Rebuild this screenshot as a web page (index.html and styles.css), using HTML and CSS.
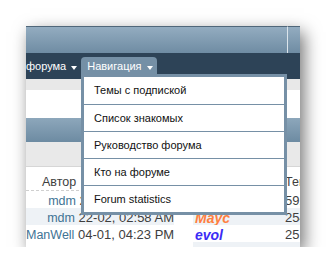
FILE: index.html
```html
<!DOCTYPE html>
<html lang="ru">
<head>
    <meta charset="UTF-8">
    <title>Навигация</title>
    <link rel="stylesheet" href="styles.css">
</head>
<body>
    <div class="window">
        <div class="topbar">
            <div class="topbar-main"></div>
            <div class="topbar-side"></div>
        </div>

        <div class="navbar">
            <span class="nav-item">форума <i class="caret"></i></span>
            <span class="nav-item nav-tab">Навигация <i class="caret"></i></span>
        </div>

        <div class="substrip"></div>
        <div class="blank"></div>
        <div class="blockhead"></div>
        <div class="blocksub"></div>

        <div class="threads">
            <div class="row head">
                <div class="cell author"><span class="sort">Автор</span></div>
                <div class="cell gap"></div>
                <div class="cell user"></div>
                <div class="cell num">Темы</div>
            </div>
            <div class="row">
                <div class="cell author"><a class="user-link">mdm</a> 23-02, 11:14 AM</div>
                <div class="cell gap"></div>
                <div class="cell user"></div>
                <div class="cell num">5921</div>
            </div>
            <div class="row alt">
                <div class="cell author"><a class="user-link">mdm</a> 22-02, 02:58 AM</div>
                <div class="cell gap"></div>
                <div class="cell user"><span class="nick orange">Маус</span></div>
                <div class="cell num">2544</div>
            </div>
            <div class="row">
                <div class="cell author"><a class="user-link">ManWell</a> 04-01, 04:23 PM</div>
                <div class="cell gap"></div>
                <div class="cell user"><span class="nick blue">evol</span></div>
                <div class="cell num">2519</div>
            </div>
            <div class="row tail">
                <div class="cell author"></div>
                <div class="cell gap"></div>
                <div class="cell user"></div>
                <div class="cell num"></div>
            </div>
        </div>

        <div class="dropdown">
            <ul>
                <li>Темы с подпиской</li>
                <li>Список знакомых</li>
                <li>Руководство форума</li>
                <li>Кто на форуме</li>
                <li>Forum statistics</li>
            </ul>
        </div>
    </div>
</body>
</html>
```

FILE: styles.css
```css
body {
    margin: 0;
    background-color: #fff;
    font-family: "Liberation Sans", Arial, sans-serif;
}

.window {
    position: relative;
    width: 274px;
    height: 221px;
    margin: 26px 0 0 26px;
    overflow: hidden;
    background-color: #fff;
    box-shadow: 4px 6px 16px rgba(0, 0, 0, 0.55);
}

/* top header */
.topbar {
    display: flex;
    height: 27px;
}

.topbar-main, .topbar-side {
    box-sizing: border-box;
    border-top: 1px solid #50677a;
    background: linear-gradient(#93acc0, #6f8ca3);
}

.topbar-main {
    width: 261px;
}

.topbar-side {
    width: 13px;
    border-left: 1px solid #dbe4eb;
}

/* navbar */
.navbar {
    display: flex;
    align-items: flex-end;
    height: 26px;
    background-color: #2d4357;
    font-size: 11px;
    color: #fff;
}

.nav-item {
    display: flex;
    align-items: flex-start;
    box-sizing: border-box;
    height: 22px;
    padding: 3px 4px 0 0;
    line-height: 13px;
    white-space: nowrap;
}

.nav-tab {
    padding: 3px 4px 0 6px;
    background-color: #7590a6;
    border-radius: 4px 4px 0 0;
}

.caret {
    width: 0;
    height: 0;
    margin: 6px 0 0 5px;
    border-top: 4px solid #fff;
    border-left: 3.5px solid transparent;
    border-right: 3.5px solid transparent;
}

.substrip {
    height: 11px;
    background-color: #e8e8e8;
}

.blank {
    height: 28px;
}

.blockhead {
    height: 24px;
    background: linear-gradient(#8da7bb, #6d8ba2);
}

.blocksub {
    height: 24px;
    background-color: #e9e9e9;
    border-bottom: 1px solid #d6d6d6;
}

/* thread list */
.threads {
    font-size: 13px;
    color: #3e3e3e;
}

.row {
    display: grid;
    grid-template-columns: 148px 19px 90px 1fr;
    box-sizing: border-box;
    height: 17px;
    line-height: 14px;
    white-space: nowrap;
}

.cell {
    box-sizing: border-box;
    padding-top: 3px;
    overflow: hidden;
}

.row.head {
    height: 24px;
    font-size: 12.5px;
}

.row.head .cell {
    padding-top: 8px;
}

.row.head .author {
    text-align: left;
    padding-left: 16px;
    border-bottom: 1px dashed #cfcfcf;
}

.author {
    text-align: right;
}

.user-link {
    font-size: 12.5px;
    color: #417394;
}

.user {
    padding-left: 2px;
}

.num {
    padding-left: 2px;
}

.row.alt .author, .row.alt .user, .row.alt .num,
.row.tail .user, .row.tail .num {
    background-color: #eef2f6;
}

.nick {
    font-weight: bold;
    font-style: italic;
    font-size: 14px;
}

.nick.orange {
    color: #ff7f3f;
}

.nick.blue {
    color: #3b2cf5;
}

/* dropdown menu */
.dropdown {
    position: absolute;
    left: 55px;
    top: 48px;
    width: 206px;
    box-sizing: border-box;
    border: 3px solid #7690a6;
    background-color: #fff;
}

.dropdown ul {
    list-style: none;
    margin: 0;
    padding: 0;
}

.dropdown li {
    height: 26px;
    padding: 0 10px;
    font-size: 11px;
    line-height: 27px;
    color: #111;
    border-top: 1px solid #7690a6;
}

.dropdown li:first-child {
    border-top: none;
    height: 27px;
}
```
